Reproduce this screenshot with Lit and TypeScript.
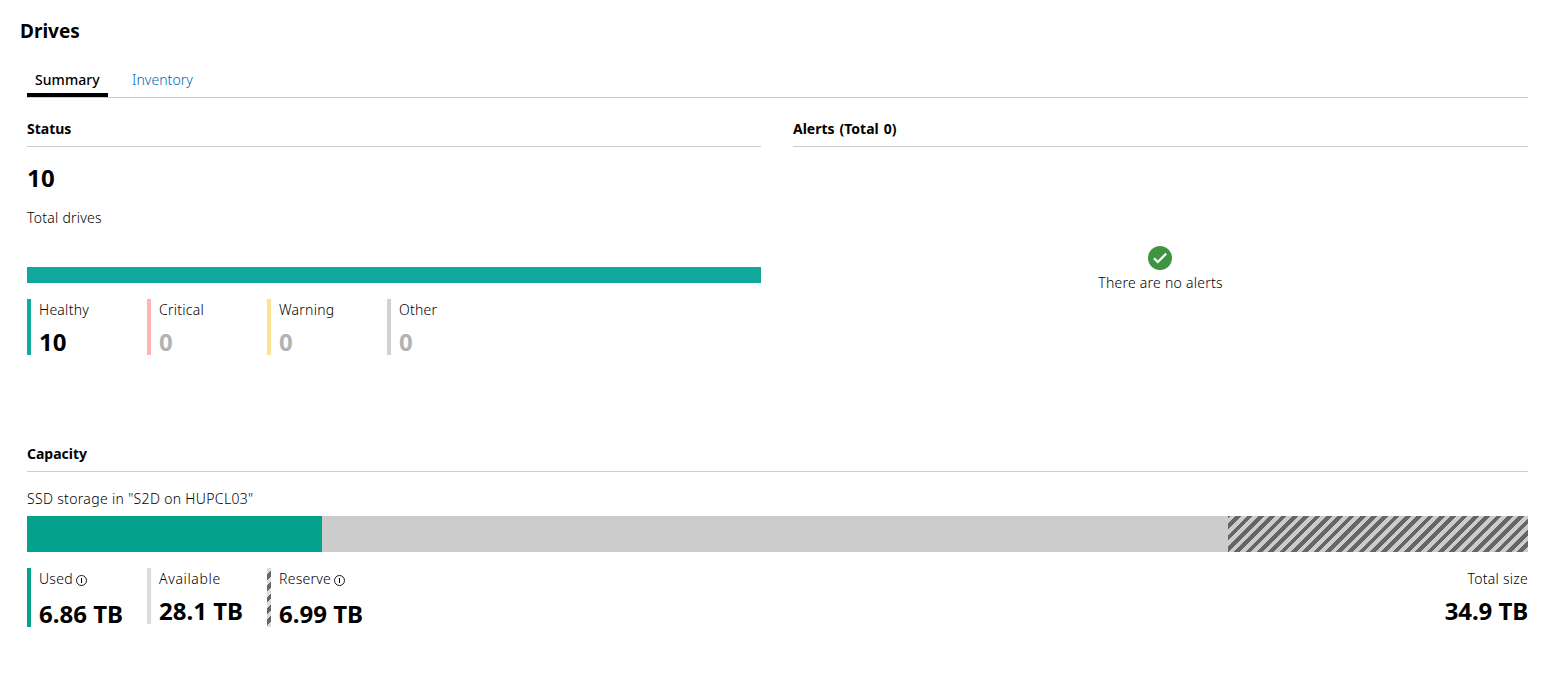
import { LitElement, html, css } from 'lit';
import { customElement, property } from 'lit/decorators.js';

const infoIcon = html`
  <svg class="info" viewBox="0 0 11 11" width="11" height="11">
    <circle cx="5.5" cy="5.5" r="5" fill="none" stroke="#000" stroke-width="0.9" />
    <path d="M5.5 3v5" fill="none" stroke="#000" stroke-width="1" />
  </svg>
`;

@customElement('legend-item')
class LegendItem extends LitElement {
  static styles = css`
    :host {
      display: block;
      flex: 0 0 120px;
    }
    .item {
      display: flex;
      height: 56px;
    }
    .item.tall {
      height: 59px;
    }
    .marker {
      width: 4px;
      margin-right: 8px;
    }
    .healthy {
      background: #13a89e;
    }
    .critical {
      background: #ffb3b5;
    }
    .warning {
      background: #fde293;
    }
    .other {
      background: #d2d2d2;
    }
    .used {
      background: #04a28c;
    }
    .available {
      background: #dcdcdc;
    }
    .available + div .label {
      letter-spacing: 0.65px;
    }
    .reserve {
      background: repeating-linear-gradient(-45deg, #dcdcdc 0 4px, #666 4px 8px);
    }
    .label {
      display: flex;
      align-items: center;
      height: 22px;
      white-space: nowrap;
    }
    .info {
      margin: 3px 0 0 3.5px;
    }
    .value {
      margin-top: 4px;
      font-size: 24px;
      line-height: 34px;
      font-weight: 700;
      letter-spacing: 0;
      white-space: nowrap;
    }
    .tall .value {
      margin-top: 7px;
    }
    .muted {
      color: #b2b2b2;
    }
  `;

  @property() kind = '';
  @property() label = '';
  @property() value = '';
  @property({ type: Boolean }) info = false;

  render() {
    return html`
      <div class="item ${this.info ? 'tall' : ''}">
        <div class="marker ${this.kind}"></div>
        <div>
          <div class="label">${this.label}${this.info ? infoIcon : ''}</div>
          <div class="value ${this.value === '0' ? 'muted' : ''}">${this.value}</div>
        </div>
      </div>
    `;
  }
}

@customElement('app-root')
class AppRoot extends LitElement {
  static styles = css`
    :host {
      display: block;
      box-sizing: border-box;
      height: 674px;
      padding: 19px 28px 0 27px;
      background: #fff;
      color: #000;
      font-family: 'Noto Sans', 'Open Sans', sans-serif;
      font-size: 14px;
      font-weight: 350;
      letter-spacing: 0.25px;
      line-height: 20px;
    }
    h1,
    h2 {
      margin: 0;
    }
    h1 {
      margin-left: -7px;
      font-size: 19px;
      line-height: 24px;
      font-weight: 700;
      letter-spacing: 0;
    }
    h2 {
      height: 27px;
      padding-top: 1px;
      border-bottom: 1px solid #ccc;
      font-size: 14px;
      line-height: 20px;
      font-weight: 700;
      letter-spacing: 0;
      word-spacing: 1.3px;
    }
    .tabs {
      display: flex;
      height: 30px;
      margin-top: 24px;
      border-bottom: 1px solid #ccc;
    }
    .tab {
      box-sizing: border-box;
      height: 30px;
      padding: 3px 8px 0;
      margin-right: 16px;
      color: #0067b8;
      letter-spacing: 0.05px;
    }
    .tab.active {
      width: 81px;
      border-bottom: 4px solid #000;
      color: #000;
      font-weight: 500;
    }
    .columns {
      display: grid;
      grid-template-columns: 734px 735px;
      column-gap: 32px;
      height: 325px;
      padding-top: 20px;
      box-sizing: border-box;
    }
    .total {
      margin-top: 15px;
      font-size: 24px;
      line-height: 32px;
      font-weight: 700;
    }
    .caption {
      margin-top: 14px;
    }
    .status-bar {
      height: 16px;
      margin: 39px 0 16px;
      background: #13a89e;
    }
    .legend {
      display: flex;
    }
    .empty {
      display: flex;
      flex-direction: column;
      align-items: center;
      padding-top: 99px;
    }
    .empty-icon {
      margin-right: 1px;
    }
    .empty-text {
      margin-top: 3px;
    }
    .capacity {
      padding-top: 20px;
    }
    .pool {
      margin-top: 17px;
      letter-spacing: 0.33px;
    }
    .capacity-bar {
      display: flex;
      height: 36px;
      margin: 7px 0 16px;
      background: #ccc;
    }
    .capacity-used {
      background: #04a28c;
    }
    .capacity-reserve {
      margin-left: auto;
      background: repeating-linear-gradient(-45deg, #ccc 0 4px, #666 4px 8px);
    }
    .size {
      margin-left: auto;
      text-align: right;
    }
    .size-label {
      line-height: 22px;
    }
    .size-value {
      margin-top: 4px;
      font-size: 24px;
      line-height: 34px;
      font-weight: 700;
      letter-spacing: -0.1px;
    }
  `;

  statuses = [
    { kind: 'healthy', label: 'Healthy', value: '10' },
    { kind: 'critical', label: 'Critical', value: '0' },
    { kind: 'warning', label: 'Warning', value: '0' },
    { kind: 'other', label: 'Other', value: '0' },
  ];

  capacities = [
    { kind: 'used', label: 'Used', value: '6.86 TB', info: true },
    { kind: 'available', label: 'Available', value: '28.1 TB', info: false },
    { kind: 'reserve', label: 'Reserve', value: '6.99 TB', info: true },
  ];

  usedWidth = 295;
  reserveWidth = 300;

  _renderLegend(items) {
    return items.map(
      (item) => html`
        <legend-item
          .kind=${item.kind}
          .label=${item.label}
          .value=${item.value}
          .info=${!!item.info}
        ></legend-item>
      `
    );
  }

  render() {
    return html`
      <h1>Drives</h1>
      <div class="tabs">
        <div class="tab active">Summary</div>
        <div class="tab">Inventory</div>
      </div>
      <div class="columns">
        <section>
          <h2>Status</h2>
          <div class="total">10</div>
          <div class="caption">Total drives</div>
          <div class="status-bar"></div>
          <div class="legend">${this._renderLegend(this.statuses)}</div>
        </section>
        <section>
          <h2>Alerts (Total 0)</h2>
          <div class="empty">
            <svg class="empty-icon" viewBox="0 0 24 24" width="24" height="24">
              <circle cx="12" cy="12" r="12" fill="#3f9440" />
              <path d="M6 12.2l3.8 3.8 8.4-8.4" fill="none" stroke="#fff" stroke-width="2.2" />
            </svg>
            <div class="empty-text">There are no alerts</div>
          </div>
        </section>
      </div>
      <section class="capacity">
        <h2>Capacity</h2>
        <div class="pool">SSD storage in "S2D on HUPCL03"</div>
        <div class="capacity-bar">
          <div class="capacity-used" style="width: ${this.usedWidth}px"></div>
          <div class="capacity-reserve" style="width: ${this.reserveWidth}px"></div>
        </div>
        <div class="legend">
          ${this._renderLegend(this.capacities)}
          <div class="size">
            <div class="size-label">Total size</div>
            <div class="size-value">34.9 TB</div>
          </div>
        </div>
      </section>
    `;
  }
}
